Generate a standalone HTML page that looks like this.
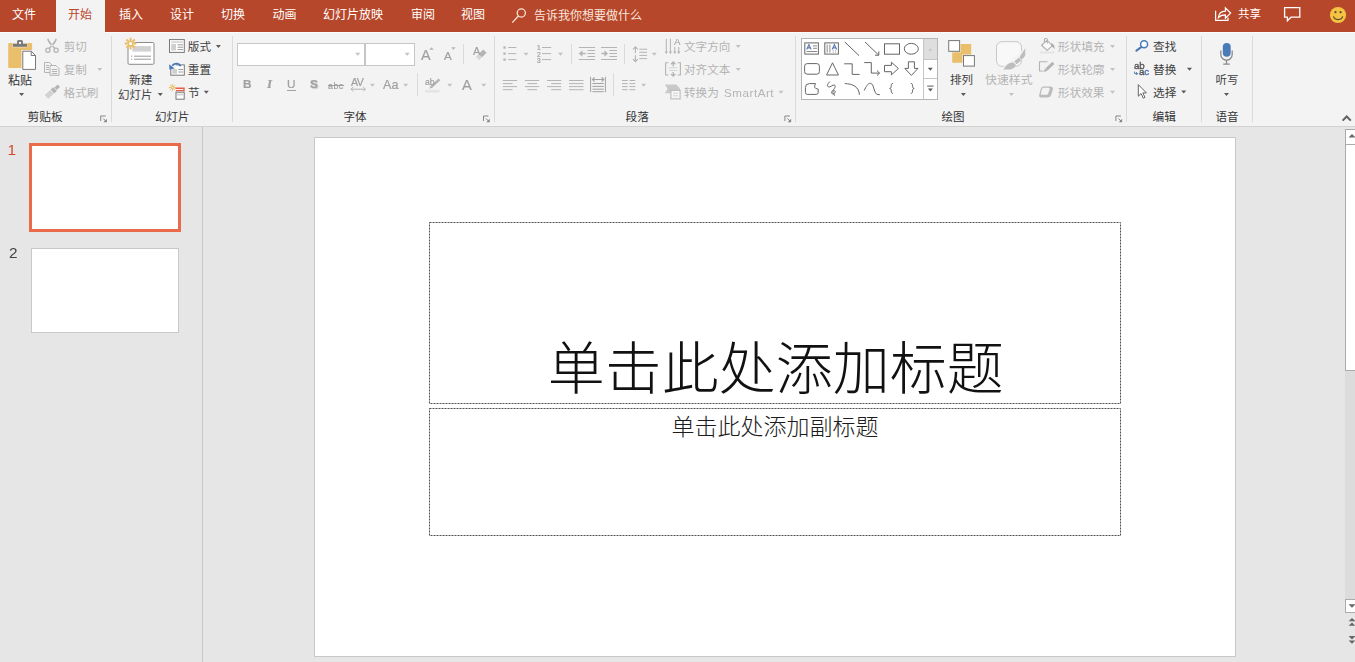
<!DOCTYPE html>
<html lang="zh"><head><meta charset="utf-8"><title>PowerPoint</title>
<style>
html,body{margin:0;padding:0}
body{width:1355px;height:662px;overflow:hidden;background:#e6e6e6;position:relative;font-family:"Liberation Sans",sans-serif;font-size:12px;color:#444}
div{position:absolute;box-sizing:border-box}
#tabbar{left:0;top:0;width:1355px;height:32px;background:#b7472a}
#acttab{left:56px;top:0;width:49px;height:33px;background:#f3f3f3}
#ribbon{left:0;top:32px;width:1355px;height:95px;background:#f3f3f3;border-bottom:1px solid #d2d2d2;border-top:1px solid #fbfbfb}
.sep{width:1px;background:#dadada}
.gsep{top:36px;height:86px}
.box{background:#fff;border:1px solid #c6c6c6}
#panel{left:0;top:127px;width:203px;height:535px;background:#e6e6e6;border-right:1px solid #c8c8c8}
#th1{left:29px;top:143px;width:152px;height:89px;background:#fff;border:3px solid #e96b4b}
#th2{left:31px;top:248px;width:148px;height:85px;background:#fff;border:1px solid #c9c9c9}
#slide{left:314px;top:137px;width:922px;height:520px;background:#fff;border:1px solid #c8c8c8}
.ph{border:1px dotted #666}
#ovl{position:absolute;left:0;top:0}
.lat{position:absolute;white-space:nowrap;line-height:1;will-change:transform}
</style></head><body>
<div id="tabbar"></div>
<div id="ribbon"></div><div id="acttab"></div>
<div class="sep gsep" style="left:111px"></div>
<div class="sep gsep" style="left:232px"></div>
<div class="sep gsep" style="left:494px"></div>
<div class="sep gsep" style="left:795px"></div>
<div class="sep gsep" style="left:1126px"></div>
<div class="sep gsep" style="left:1201px"></div>
<div class="sep gsep" style="left:1252px"></div>
<div class="sep" style="left:463px;top:44px;height:20px"></div>
<div class="sep" style="left:417px;top:73px;height:23px"></div>
<div class="sep" style="left:571px;top:44px;height:20px"></div>
<div class="sep" style="left:624px;top:44px;height:20px"></div>
<div class="sep" style="left:613px;top:73px;height:23px"></div>
<div class="box" style="left:237px;top:43px;width:129px;height:23px"></div>
<div class="box" style="left:364px;top:43px;width:51px;height:23px;border-left-width:2px"></div>
<div class="box" style="left:801px;top:38px;width:137px;height:62px;border-color:#b5b5b5"></div>
<div style="left:923px;top:39px;width:14px;height:21px;background:#dedede;border-left:1px solid #c6c6c6;border-bottom:1px solid #c6c6c6"></div>
<div style="left:923px;top:60px;width:1px;height:39px;background:#c6c6c6"></div>
<div style="left:923px;top:78px;width:14px;height:1px;background:#c6c6c6"></div>
<div style="left:1345px;top:129px;width:12px;height:470px;background:#dcdcdc"></div>
<div class="box" style="left:1345px;top:129px;width:12px;height:16px;border-color:#ababab"></div>
<div class="box" style="left:1345px;top:144px;width:12px;height:227px;border-color:#ababab"></div>
<div class="box" style="left:1345px;top:599px;width:12px;height:14px;border-color:#ababab"></div>
<div id="panel"></div>
<div id="th1"></div><div id="th2"></div>
<div id="slide"></div>
<svg id="ovl" width="1355" height="662" viewBox="0 0 1355 662">
<g fill="none" stroke="#4f4f4f" stroke-width="1" stroke-dasharray="2 1"><rect x="429.5" y="222.5" width="691" height="181"/><rect x="429.5" y="408.5" width="691" height="127"/></g>
<path fill="#5a5a5a" d="M19.10 93.10h5l-2.5 3z"/>
<path fill="#5a5a5a" d="M157.80 92.90h5l-2.5 3z"/>
<path fill="#5a5a5a" d="M960.90 93.00h5l-2.5 3z"/>
<path fill="#c2c2c2" d="M1008.90 92.90h5l-2.5 3z"/>
<path fill="#5a5a5a" d="M1224.00 93.00h5l-2.5 3z"/>
<path fill="#c2c2c2" d="M97.30 67.90h5l-2.5 3z"/>
<path fill="#5a5a5a" d="M215.90 45.10h5l-2.5 3z"/>
<path fill="#5a5a5a" d="M203.80 90.70h5l-2.5 3z"/>
<path fill="#c2c2c2" d="M355.20 52.70h5l-2.5 3z"/>
<path fill="#c2c2c2" d="M404.70 52.70h5l-2.5 3z"/>
<path fill="#c2c2c2" d="M369.90 83.70h5l-2.5 3z"/>
<path fill="#c2c2c2" d="M403.20 83.70h5l-2.5 3z"/>
<path fill="#c2c2c2" d="M447.30 83.70h5l-2.5 3z"/>
<path fill="#c2c2c2" d="M481.30 83.70h5l-2.5 3z"/>
<path fill="#c2c2c2" d="M523.60 52.70h5l-2.5 3z"/>
<path fill="#c2c2c2" d="M558.00 52.70h5l-2.5 3z"/>
<path fill="#c2c2c2" d="M651.80 52.70h5l-2.5 3z"/>
<path fill="#c2c2c2" d="M641.20 83.70h5l-2.5 3z"/>
<path fill="#c2c2c2" d="M735.70 45.10h5l-2.5 3z"/>
<path fill="#c2c2c2" d="M735.70 67.90h5l-2.5 3z"/>
<path fill="#c2c2c2" d="M778.50 90.70h5l-2.5 3z"/>
<path fill="#c2c2c2" d="M1110.00 45.10h5l-2.5 3z"/>
<path fill="#c2c2c2" d="M1110.00 67.90h5l-2.5 3z"/>
<path fill="#c2c2c2" d="M1110.00 90.70h5l-2.5 3z"/>
<path fill="#5a5a5a" d="M1187.00 67.70h5l-2.5 3z"/>
<path fill="#5a5a5a" d="M1181.20 90.50h5l-2.5 3z"/>
<path fill="#5a5a5a" d="M927.80 67.80h5l-2.5 3z"/>
<g fill="none" stroke="#f8e4dc" stroke-width="1.3"><circle cx="521.3" cy="13" r="4.1"/><path d="M518.4 16L512.3 22.6"/></g>
<g fill="none" stroke="#fff" stroke-width="1.25" stroke-linejoin="miter"><path d="M1215.6 10.8V20.4H1228V17.6"/><path d="M1218.4 17.6C1218.8 13.4 1221.6 11.3 1225.4 11.2V7.9L1230.6 13.1L1225.4 18.2V14.9C1222.4 14.8 1220.2 15.6 1218.4 17.6Z"/></g>
<path fill="none" stroke="#fff" stroke-width="1.3" d="M1284.6 7.6H1299.8V17.2H1291L1287.4 20.8V17.2H1284.6Z"/>
<circle cx="1338" cy="15" r="8.1" fill="#f4c343"/><circle cx="1335.5" cy="12.2" r="1.1" fill="#5b4a2c"/><circle cx="1340.6" cy="12.2" r="1.1" fill="#5b4a2c"/><path d="M1333.5 16.4C1334.6 20.6 1341.6 20.6 1342.7 16.4" fill="none" stroke="#5b4a2c" stroke-width="1.2"/>
<path d="M1342.6 120.6L1346.7 116.5L1350.8 120.6" fill="none" stroke="#606060" stroke-width="2"/>
<rect x="8.2" y="42.9" width="23.9" height="25" rx="1" fill="#eabf6c"/>
<path fill="#787878" stroke="#f6efe0" stroke-width="0.9" paint-order="stroke" d="M12.9 46.8V43.7H17V41.4Q17 39.9 18.5 39.9H21.4Q22.9 39.9 22.9 41.4V43.7H27.1V46.8Z"/><rect x="18.9" y="41.9" width="2.1" height="2" fill="#f6f6f6"/>
<path fill="#fff" stroke="#f3f3f3" stroke-width="2.6" d="M22.8 51.2H31.2L35.5 55.5V69.4H22.8Z"/>
<path fill="#fff" stroke="#787878" stroke-width="1" d="M22.8 51.2H31.2L35.5 55.5V69.4H22.8Z"/><path fill="none" stroke="#787878" d="M31.2 51.2V55.5H35.5"/>
<g fill="none" stroke="#b4b4b4" stroke-width="1.3"><circle cx="47.9" cy="50.3" r="2.1"/><circle cx="56.1" cy="50.3" r="2.1"/></g><path fill="#b4b4b4" d="M47.2 38.8C47.6 42 49.6 44.6 54.4 48.9L55.4 47.9L52.6 44.9C50.4 42.4 49.2 40.6 48.4 38.6ZM56.8 38.8C56.4 42 54.4 44.6 49.6 48.9L48.6 47.9L51.4 44.9C53.6 42.4 54.8 40.6 55.6 38.6Z"/>
<g fill="#f3f3f3" stroke="#b4b4b4" stroke-width="1"><path d="M44.5 62.5H49.5L52 65V72.5H44.5Z"/><path d="M50 65.5H56L59 68.5V75.3H50Z"/></g><path stroke="#b4b4b4" fill="none" d="M46 65.5H49M46 67.5H49M46 69.5H49M51.8 69.5H57.2M51.8 71.5H57.2M51.8 73.5H57.2"/>
<g transform="translate(52.8,91.2) rotate(-42)"><rect x="-8.5" y="-2.6" width="7.5" height="5.2" fill="#d2d2d2"/><rect x="-0.5" y="-2.6" width="3.6" height="5.2" fill="#b4b4b4"/><rect x="3.6" y="-1.6" width="4.6" height="3.2" fill="#b4b4b4"/></g>
<path fill="none" stroke="#858585" stroke-width="1" d="M105.7 116H100.7V121"/><path fill="none" stroke="#858585" d="M103.2 118.5L106.2 121.5"/><path fill="#858585" d="M106.9 118.8V122.2H103.5Z"/>
<path fill="none" stroke="#858585" stroke-width="1" d="M488.5 116H483.5V121"/><path fill="none" stroke="#858585" d="M486 118.5L489 121.5"/><path fill="#858585" d="M489.7 118.8V122.2H486.3Z"/>
<path fill="none" stroke="#858585" stroke-width="1" d="M789.9 116H784.9V121"/><path fill="none" stroke="#858585" d="M787.4 118.5L790.4 121.5"/><path fill="#858585" d="M791.1 118.8V122.2H787.6999999999999Z"/>
<path fill="none" stroke="#858585" stroke-width="1" d="M1120.9 116H1115.9V121"/><path fill="none" stroke="#858585" d="M1118.4 118.5L1121.4 121.5"/><path fill="#858585" d="M1122.1000000000001 118.8V122.2H1118.7Z"/>
<rect x="128" y="42.5" width="26" height="21.8" rx="1.2" fill="#fff" stroke="#8a8a8a"/><rect x="132.4" y="46.1" width="18.7" height="5.5" fill="#d2d2d2"/>
<path stroke="#9a9a9a" d="M131 56.2H132.2M134 56.2H151M131 59.2H132.2M134 59.2H151"/>
<circle cx="130.6" cy="43.6" r="4" fill="#f3f3f3"/>
<path stroke="#eabf6c" stroke-width="2.0" fill="none" d="M132.55 43.60L136.50 43.60M131.98 44.98L134.77 47.77M130.60 45.55L130.60 49.50M129.22 44.98L126.43 47.77M128.65 43.60L124.70 43.60M129.22 42.22L126.43 39.43M130.60 41.65L130.60 37.70M131.98 42.22L134.77 39.43"/><circle cx="130.6" cy="43.6" r="2.1" fill="#fff" stroke="#eabf6c" stroke-width="1.1"/>
<rect x="169.5" y="39.6" width="14.8" height="12.8" fill="#fff" stroke="#777"/><rect x="171.2" y="41.3" width="11.6" height="1.5" fill="#d0d0d0"/><rect x="171.2" y="43.9" width="4.8" height="6.6" fill="#cfcfcf"/><path stroke="#9a9a9a" d="M177.6 44.8H183M177.6 47.2H183M177.6 49.6H183"/>
<rect x="170.8" y="64.9" width="13.5" height="10.3" fill="#fff" stroke="#777"/><rect x="172.3" y="69" width="4.7" height="4.8" fill="#cfcfcf"/><path stroke="#9a9a9a" d="M178.4 69.5H183M178.4 72H183"/>
<path d="M168 62H176V68H168Z" fill="#f3f3f3"/><path d="M180.6 66.2C179.6 63.4 175.2 62.4 172.2 65.6" fill="none" stroke="#4a7ab8" stroke-width="1.7"/><path fill="#4a7ab8" d="M169.2 64.2L169.4 69.6L174.6 68.4Z"/>
<path fill="none" stroke="#e8604c" stroke-width="1.4" d="M175.4 88.2H184V91.2"/><path stroke="#e8604c" stroke-width="1.2" d="M176 90.6H184"/>
<rect x="176" y="92.2" width="8.2" height="7" fill="#fff" stroke="#777"/><rect x="177" y="93.6" width="6.2" height="1.8" fill="#d0d0d0"/>
<path stroke="#eabf6c" stroke-width="1" fill="none" d="M173.05 87.60L176.00 87.60M172.86 88.06L174.95 90.15M172.40 88.25L172.40 91.20M171.94 88.06L169.85 90.15M171.75 87.60L168.80 87.60M171.94 87.14L169.85 85.05M172.40 86.95L172.40 84.00M172.86 87.14L174.95 85.05"/><circle cx="172.4" cy="87.6" r="1.1" fill="#fff" stroke="#eabf6c" stroke-width="1.1"/>
<g transform="translate(480.8,55.2) rotate(-45)"><rect x="-4.6" y="-2.4" width="4" height="4.8" fill="#d8d8d8"/><rect x="-0.6" y="-2.4" width="6.4" height="4.8" fill="#b4b4b4"/></g>
<path fill="#b4b4b4" d="M429.20 49.80h4.6l-2.3 -2.6z"/>
<path fill="#b4b4b4" d="M451.10 47.20h4.6l-2.3 2.6z"/>
<path fill="none" stroke="#b4b4b4" stroke-width="1" d="M351 89.2H365.4M353.2 87L351 89.2L353.2 91.4M363.2 87L365.4 89.2L363.2 91.4"/>
<path stroke="#b4b4b4" stroke-width="2.6" d="M439.4 79.4L431.6 86.6"/><path fill="#b4b4b4" d="M430.8 85.6L432.8 87.6L429.2 88.8Z"/><rect x="425" y="89.9" width="14.5" height="2.6" fill="#e4e4e4"/>
<rect x="503.4" y="46.4" width="2.3" height="2.3" fill="#b4b4b4"/>
<rect x="503.4" y="52.5" width="2.3" height="2.3" fill="#b4b4b4"/>
<rect x="503.4" y="58.5" width="2.3" height="2.3" fill="#b4b4b4"/>
<path stroke="#a2a2a2" fill="none" d="M592.4 83.5H603.8M592.4 86.4H603.8M592.4 89.2H603.8M592.4 91.7H603.8M590.6 76.8V92.2M605.4 76.8V92.2"/>
<path stroke="#b4b4b4" stroke-width="1" fill="none" d="M508.2 47.5H516.3M542 47.5H551.2M508.2 53.6H516.3M542 53.6H551.2M508.2 59.6H516.3M542 59.6H551.2M578.8 47.5H595.1M578.8 59.5H595.1M587.4 50.5H595.1M587.4 53.5H595.1M587.4 56.5H595.1M601 47.5H617M601 59.5H617M609.4 50.5H617M609.4 53.5H617M609.4 56.5H617M639.3 49.2H647.1M639.3 52.3H647.1M639.3 55.4H647.1M639.3 58.6H647.1M502.8 80.5H517M524.9 80.5H539.2M547 80.5H561.2M569 80.5H583.5M622 80.5H627.7M629.5 80.5H635.3M502.8 83.6H512.6M527.4 83.6H537M551.2 83.6H561.2M569 83.6H583.5M622 83.6H627.7M629.5 83.6H635.3M502.8 86.6H517M524.9 86.6H539.2M547 86.6H561.2M569 86.6H583.5M622 86.6H627.7M629.5 86.6H635.3M502.8 89.7H512.6M527.4 89.7H537M551.2 89.7H561.2M569 89.7H583.5M622 89.7H627.7M629.5 89.7H635.3"/>
<path stroke="#b4b4b4" stroke-width="1.4" d="M581 53.5H585.6M601.4 53.5H606"/><path fill="#b4b4b4" d="M578.8 53.5L582.4 50.3V56.7ZM608 53.5L604.4 50.3V56.7Z"/>
<path fill="none" stroke="#b4b4b4" stroke-width="1.1" d="M635.4 46.8V53M635.4 55.2V61.6M633 49.3L635.4 46.8L637.8 49.3M633 59.1L635.4 61.6L637.8 59.1"/>
<path fill="none" stroke="#a2a2a2" stroke-width="1.1" d="M592.4 79.5H603.8M594.6 77.3L592.4 79.5L594.6 81.7M601.6 77.3L603.8 79.5L601.6 81.7"/>
<path fill="none" stroke="#b4b4b4" stroke-width="1" d="M666.3 38.8V53.2M670.4 38.8V53.2M674.8 47V53.2M678.8 47V53.2"/>
<path fill="#b4b4b4" d="M664.6999999999999 51.4H667.9L666.3 54Z"/>
<path fill="#b4b4b4" d="M668.8 51.4H672.0L670.4 54Z"/>
<path fill="#b4b4b4" d="M673.1999999999999 51.4H676.4L674.8 54Z"/>
<path fill="#b4b4b4" d="M677.1999999999999 51.4H680.4L678.8 54Z"/>
<path fill="none" stroke="#b4b4b4" stroke-width="1.1" d="M668.4 62.8H665.6V75H668.4M677.6 62.8H680.4V75H677.6"/>
<path fill="none" stroke="#b4b4b4" stroke-width="1.3" d="M673.2 62V66.4M673.2 72V76.2M671 64.2L673.2 62L675.4 64.2M671 74L673.2 76.2L675.4 74"/><path stroke="#d4d4d4" d="M669 67.8H677.4M669 70.5H677.4"/>
<path fill="#c9c9c9" d="M664.8 84.6H676.4L680 88.8V90.4H671V93.2H664.8L667.6 88.8Z"/><rect x="670.9" y="90.3" width="9.2" height="8.6" fill="#f7f7f7" stroke="#b4b4b4"/><path stroke="#d0d0d0" d="M673 93.2H678M673 95.8H678"/>
<g fill="none" stroke="#666" stroke-width="1"><rect x="804.8" y="42.9" width="13.6" height="11.2"/><rect x="824.8" y="42.9" width="13.6" height="11.2"/><path d="M844.8 42L859 55.6"/><path d="M865 42L878.6 55M875 55.2H878.8V51.4"/><rect x="884.5" y="43.8" width="15" height="10.4"/><ellipse cx="911.3" cy="48.8" rx="7" ry="5.4"/><rect x="804.6" y="63.6" width="14.8" height="10.6" rx="2.6"/><path d="M832.5 62.8L838.4 75H826.6Z"/><path d="M844.2 63.8H852.2V74.4H859.6"/><path d="M864.2 62.6H871.3V73.1H879.4M877 70.6L879.6 73.1L877 75.6"/><path d="M884.5 65.4H891.4V62.2L898.4 68.5L891.4 74.9V71.7H884.5Z"/><path d="M908.4 61.8H914.4V68.4H918L911.4 75.4L904.8 68.4H908.4Z"/><path d="M805.4 87.6Q805.4 83.6 809.4 83.6H815.6C813.6 87.4 814.8 88.6 818.2 89V92.4Q818.2 94.4 816.2 94.4H807.4Q805.4 94.4 805.4 92.4Z"/><path d="M829.9 81.5C828 83.5 826.6 85.6 828.2 86.8C830 88 832.6 84.4 834.4 85C836.4 85.8 834.6 88.6 832.6 90.6C830.8 92.4 831.4 94.2 833.4 93.8C835.4 93.4 836 91 834.2 90.6C832.6 90.4 832.6 92.4 833.6 93.8L834.7 95.7"/><path d="M844.8 83.6C852.6 83.6 859.2 87 859.4 94.8"/><path d="M864.2 90.4C866.2 86.6 867.8 83.3 870.3 83.3C874.4 83.3 873.6 94.6 878 94.6H879.8"/><path d="M893 83.4C889.8 83.4 892.6 88.2 889.6 88.4C892.6 88.6 889.8 93.4 893 93.4"/><path d="M910.8 83.4C914 83.4 911.2 88.2 914.2 88.4C911.2 88.6 914 93.4 910.8 93.4"/></g>
<path stroke="#8a8a8a" d="M812.9 45.9H817.1M812.9 48.3H817.1M806.6 51.5H817.1M827.2 44.6V52.6M829.9 44.6V52.6"/><path stroke="#8a8a8a" stroke-dasharray="1 1" d="M833.2 50.4V52.8M835.6 50.4V52.8"/>
<path fill="none" stroke="#5a78b4" stroke-width="1.1" d="M806.7 49.5L808.9 44.6L811.1 49.5M807.5 47.9H810.3M832.2 49.5L834.4 44.6L836.6 49.5M833 47.9H835.8"/>
<path fill="#c8c8c8" d="M928.00 50.70h4.6l-2.3 -2.6z"/>
<path stroke="#5a5a5a" d="M927.2 86.1H933.6"/>
<path fill="#5a5a5a" d="M927.90 88.50h5l-2.5 3z"/>
<rect x="952.2" y="44" width="19" height="18.8" fill="#eabf6c"/>
<rect x="947.7" y="39.6" width="12.9" height="12.7" fill="#f3f3f3"/><rect x="962.4" y="54.5" width="13" height="12.6" fill="#f3f3f3"/>
<rect x="948.7" y="40.6" width="10.9" height="10.7" fill="#fff" stroke="#777"/><rect x="963.5" y="55.6" width="10.9" height="10.5" fill="#fff" stroke="#777"/>
<rect x="996.5" y="41.7" width="25" height="24.6" rx="5.5" fill="#f8f8f8" stroke="#c8c8c8"/>
<path fill="#f3f3f3" d="M1026.5 47L1026.5 55L1014 68.5H1001.5Z"/>
<path fill="#bdbdbd" d="M1003.4 69.4C1006.2 64.6 1009.2 62.2 1013.4 62.4L1015.9 64.9C1015.6 68.6 1009.6 70.2 1003.4 69.4ZM1014.2 61.6L1018.8 57.7L1021.3 60.3L1016.6 64.2ZM1019.4 57.2L1025.2 48.3V55.8L1021.7 59.7Z"/>
<g fill="none" stroke="#b4b4b4" stroke-width="1.2" stroke-linejoin="round"><path d="M1047 40.4L1052.4 45.6L1047.2 50.4L1041.6 45.2Z" fill="#fafafa"/><path d="M1047.3 43.4V39.4Q1047.3 38.5 1046.4 38.5H1045.3Q1044.4 38.5 1044.4 39.4V42"/></g><path fill="#a8a8a8" d="M1051 43.4C1053.4 43.4 1054.8 45.6 1054.6 49.6C1053.8 47.8 1053 47 1051.6 46.6Z"/><rect x="1040" y="51.5" width="14.4" height="2" fill="#e4e4e4"/>
<path fill="none" stroke="#b4b4b4" stroke-width="1.1" d="M1047.4 61.8H1039.5V71H1043.4"/><path stroke="#b4b4b4" stroke-width="3" d="M1053.4 62.8L1046.6 69.4"/><path fill="#b4b4b4" d="M1045 68.2L1047.8 70.8L1043.8 72Z"/>
<path fill="#bcbcbc" d="M1043.4 86.6H1050.2Q1053.6 86.6 1052.8 89.6L1051.2 95Q1050.6 97.4 1048 97.4H1041.2Q1038.6 97.4 1039.2 95L1040.8 89Q1041.4 86.6 1043.4 86.6Z"/><path fill="#f4f4f4" d="M1043.6 87.8H1048.6Q1050 87.8 1049.6 89L1048.2 93.6Q1047.8 94.8 1046.6 94.8H1041.6Q1040.4 94.8 1040.8 93.6L1042.2 88.8Q1042.5 87.8 1043.6 87.8Z"/>
<circle cx="1144.1" cy="44.2" r="3.5" fill="#fff" stroke="#4a7ab8" stroke-width="1.5"/><path stroke="#4a7ab8" stroke-width="2.1" stroke-linecap="round" d="M1141.2 47.2L1136.4 50.6"/>
<path fill="none" stroke="#4a7ab8" stroke-width="1" d="M1134.6 71.6V73.6H1137.6M1136.2 72.2L1137.6 73.6L1136.2 75"/>
<path fill="#fff" stroke="#666" stroke-width="1" stroke-linejoin="miter" d="M1138.3 84.6V96.2L1141.1 93.6L1143.3 98.2L1145 97.4L1142.8 92.9H1146.4Z"/>
<rect x="1222.8" y="43" width="7.9" height="13.7" rx="3.9" fill="#4a7ab8"/><path fill="none" stroke="#8a8a8a" stroke-width="1.3" d="M1220.8 50.4V54.4A5.7 5.7 0 0 0 1232.2 54.4V50.4M1226.5 60.2V63.8M1223.2 64.2H1229.8"/>
<path fill="#666" d="M1348.50 137.60h7l-3.5 -3.6z"/>
<path fill="#666" d="M1348.50 604.20h7l-3.5 3.6z"/>
<path fill="#666" d="M1348.6 621.2H1355.4L1352 618ZM1348.6 625.8H1355.4L1352 622.4Z"/>
<path fill="#666" d="M1348.6 636H1355.4L1352 639.4ZM1348.6 640.4H1355.4L1352 643.8Z"/>
<g id="txt" font-family="'Liberation Sans','Noto Sans CJK SC',sans-serif">
<text x="12" y="19" font-size="12" fill="#ffffff">文件</text>
<text x="119" y="19" font-size="12" fill="#ffffff">插入</text>
<text x="170" y="19" font-size="12" fill="#ffffff">设计</text>
<text x="221" y="19" font-size="12" fill="#ffffff">切换</text>
<text x="272.5" y="19" font-size="12" fill="#ffffff">动画</text>
<text x="323" y="19" font-size="12" fill="#ffffff">幻灯片放映</text>
<text x="411" y="19" font-size="12" fill="#ffffff">审阅</text>
<text x="461" y="19" font-size="12" fill="#ffffff">视图</text>
<text x="68" y="19" font-size="12" fill="#b7472a">开始</text>
<text x="534" y="20" font-size="12" fill="#f8e6df">告诉我你想要做什么</text>
<text x="1238" y="18" font-size="11.5" fill="#ffffff">共享</text>
<text x="8" y="84.5" font-size="12" fill="#333">粘贴</text>
<text x="129" y="84.3" font-size="11.7" fill="#3f3f3f">新建</text>
<text x="118" y="98.8" font-size="11.5" fill="#3f3f3f">幻灯片</text>
<text x="950" y="84.3" font-size="11.5" fill="#3f3f3f">排列</text>
<text x="985" y="84.3" font-size="11.9" fill="#b4b4b4">快速样式</text>
<text x="1215.5" y="84.2" font-size="11.5" fill="#3f3f3f">听写</text>
<text x="63.8" y="51.4" font-size="11.5" fill="#b4b4b4">剪切</text>
<text x="63.8" y="74" font-size="11.5" fill="#b4b4b4">复制</text>
<text x="63.6" y="97" font-size="11.6" fill="#b4b4b4">格式刷</text>
<text x="187.8" y="51.4" font-size="11.6" fill="#3f3f3f">版式</text>
<text x="187.8" y="74" font-size="11.6" fill="#3f3f3f">重置</text>
<text x="188" y="97" font-size="11.6" fill="#3f3f3f">节</text>
<text x="684" y="51.4" font-size="11.6" fill="#b4b4b4">文字方向</text>
<text x="684" y="74" font-size="11.6" fill="#b4b4b4">对齐文本</text>
<text x="684" y="97" font-size="11.6" fill="#b4b4b4">转换为</text>
<text x="1057.8" y="51.4" font-size="11.7" fill="#b4b4b4">形状填充</text>
<text x="1057.8" y="74" font-size="11.7" fill="#b4b4b4">形状轮廓</text>
<text x="1057.8" y="97" font-size="11.7" fill="#b4b4b4">形状效果</text>
<text x="1153" y="51.4" font-size="11.7" fill="#3f3f3f">查找</text>
<text x="1153" y="74" font-size="11.7" fill="#3f3f3f">替换</text>
<text x="1153" y="97" font-size="11.7" fill="#3f3f3f">选择</text>
<text x="27.5" y="120.5" font-size="11.7" fill="#333">剪贴板</text>
<text x="155" y="120.5" font-size="11.5" fill="#333">幻灯片</text>
<text x="343.5" y="120.5" font-size="11.6" fill="#333">字体</text>
<text x="625.5" y="120.5" font-size="11.7" fill="#333">段落</text>
<text x="941.5" y="120.5" font-size="11.5" fill="#333">绘图</text>
<text x="1152.5" y="120.5" font-size="11.7" fill="#333">编辑</text>
<text x="1215.5" y="120.5" font-size="11.5" fill="#333">语音</text>
<text x="775.8" y="389" font-size="57" font-weight="300" text-anchor="middle" fill="#111">单击此处添加标题</text>
<text x="775" y="434.8" font-size="23" font-weight="300" text-anchor="middle" fill="#1c1c1c">单击此处添加副标题</text>
</g>
</svg>
<span class="lat" style="left:724.4px;top:86.7px;font-size:11.6px;letter-spacing:0.55px;color:#b4b4b4">SmartArt</span>
<svg class="lat" style="left:8px;top:143px" width="8" height="13" viewBox="8 143 8 13"><text x="7.6" y="155.3" font-size="15.4" font-family="'Liberation Sans',sans-serif" fill="#d24b28">1</text></svg>
<span class="lat" style="left:8.7px;top:244.9px;font-size:15.4px;color:#444">2</span>
<span class="lat" style="left:243.4px;top:78.9px;font-size:11.8px;font-weight:bold;color:#a0a0a0;-webkit-text-stroke:0.2px #a0a0a0">B</span>
<span class="lat" style="left:267px;top:77px;font-family:'Liberation Serif',serif;font-style:italic;font-weight:bold;font-size:13px;color:#a0a0a0;-webkit-text-stroke:0.2px #a0a0a0">I</span>
<span class="lat" style="left:287.4px;top:78.9px;font-size:11.8px;color:#a0a0a0;-webkit-text-stroke:0.2px #a0a0a0">U</span>
<div style="left:287px;top:89.5px;width:9px;height:1.2px;background:#a0a0a0"></div>
<span class="lat" style="left:310px;top:78.9px;font-size:11.8px;font-weight:bold;color:#a0a0a0;-webkit-text-stroke:0.2px #a0a0a0;text-shadow:1px 1px 1px #ccc">S</span>
<span class="lat" style="left:328px;top:82px;font-size:8.8px;color:#a0a0a0;-webkit-text-stroke:0.2px #a0a0a0;letter-spacing:0.5px">abc</span>
<div style="left:328px;top:85.2px;width:16.2px;height:1px;background:#a0a0a0"></div>
<span class="lat" style="left:350.6px;top:76.5px;font-size:10.6px;color:#a0a0a0;-webkit-text-stroke:0.2px #a0a0a0;letter-spacing:-0.6px">AV</span>
<span class="lat" style="left:383.4px;top:79px;font-size:12.6px;color:#a0a0a0;-webkit-text-stroke:0.2px #a0a0a0">Aa</span>
<span class="lat" style="left:421.1px;top:47.8px;font-size:14.4px;color:#a0a0a0;-webkit-text-stroke:0.2px #a0a0a0">A</span>
<span class="lat" style="left:443.8px;top:49.6px;font-size:11.6px;color:#a0a0a0;-webkit-text-stroke:0.2px #a0a0a0">A</span>
<span class="lat" style="left:473px;top:45.8px;font-size:11px;color:#a0a0a0;-webkit-text-stroke:0.2px #a0a0a0">A</span>
<span class="lat" style="left:424.8px;top:77.6px;font-size:8.6px;color:#a0a0a0;-webkit-text-stroke:0.2px #a0a0a0">ab</span>
<span class="lat" style="left:462.1px;top:77.6px;font-size:14.6px;color:#a0a0a0;-webkit-text-stroke:0.2px #a0a0a0">A</span>
<span class="lat" style="left:536.8px;top:45.4px;font-size:6.6px;color:#a0a0a0;-webkit-text-stroke:0.2px #a0a0a0">1</span>
<span class="lat" style="left:536.8px;top:51.5px;font-size:6.6px;color:#a0a0a0;-webkit-text-stroke:0.2px #a0a0a0">2</span>
<span class="lat" style="left:536.8px;top:57.5px;font-size:6.6px;color:#a0a0a0;-webkit-text-stroke:0.2px #a0a0a0">3</span>
<span class="lat" style="left:673.5px;top:37px;font-size:9.8px;color:#9a9a9a">A</span>
<span class="lat" style="left:1133.8px;top:60.6px;font-size:9.8px;color:#555;letter-spacing:-0.2px;-webkit-text-stroke:0.35px #555">ab</span>
<span class="lat" style="left:1139.2px;top:67.4px;font-size:9.8px;color:#555;letter-spacing:-0.2px;-webkit-text-stroke:0.35px #555">a<span style="color:#4a6fb5;-webkit-text-stroke:0.35px #4a6fb5">c</span></span>
</body></html>
